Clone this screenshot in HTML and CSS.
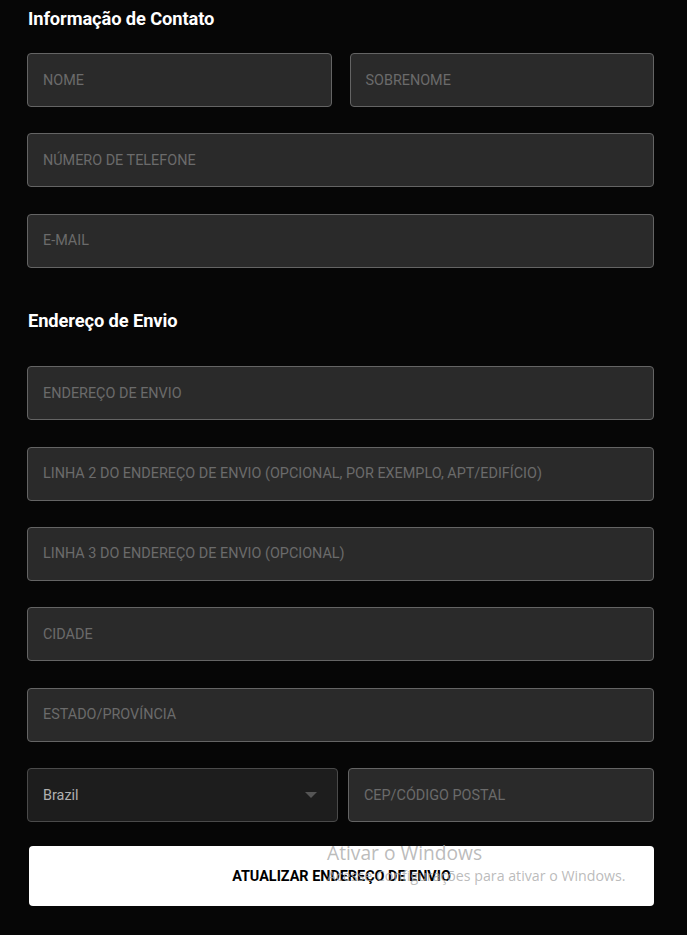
FILE: index.html
```html
<!DOCTYPE html>
<html lang="pt-BR">
<head>
<meta charset="utf-8">
<title>Endereço de Envio</title>
<link rel="stylesheet" href="styles.css">
</head>
<body>
<main class="page">
  <h2 class="section-title first">Informação de Contato</h2>
  <div class="row two">
    <div class="field"><span class="ph">NOME</span></div>
    <div class="field"><span class="ph">SOBRENOME</span></div>
  </div>
  <div class="field"><span class="ph">NÚMERO DE TELEFONE</span></div>
  <div class="field"><span class="ph">E-MAIL</span></div>

  <h2 class="section-title second">Endereço de Envio</h2>
  <div class="field"><span class="ph">ENDEREÇO DE ENVIO</span></div>
  <div class="field"><span class="ph">LINHA 2 DO ENDEREÇO DE ENVIO (OPCIONAL, POR EXEMPLO, APT/EDIFÍCIO)</span></div>
  <div class="field"><span class="ph">LINHA 3 DO ENDEREÇO DE ENVIO (OPCIONAL)</span></div>
  <div class="field"><span class="ph">CIDADE</span></div>
  <div class="field"><span class="ph">ESTADO/PROVÍNCIA</span></div>
  <div class="row split">
    <div class="field select"><span class="val">Brazil</span><span class="caret"></span></div>
    <div class="field"><span class="ph">CEP/CÓDIGO POSTAL</span></div>
  </div>
  <button class="submit">ATUALIZAR ENDEREÇO DE ENVIO</button>
</main>
<div class="watermark">
  <div class="wm-title">Ativar o Windows</div>
  <div class="wm-sub">Acesse Configurações para ativar o Windows.</div>
</div>
</body>
</html>
```
FILE: styles.css
```css
html, body {
  margin: 0;
  padding: 0;
  background: #060606;
}
body {
  font-family: Roboto, "Liberation Sans", sans-serif;
  width: 687px;
  height: 935px;
  overflow: hidden;
  position: relative;
}
.page {
  padding: 0 33px 0 27px;
  display: flex;
  flex-direction: column;
}
.section-title {
  margin: 0;
  color: #ffffff;
  font-family: Roboto, "Liberation Sans", sans-serif;
  font-weight: 700;
  font-size: 18.3px;
  line-height: 22px;
  letter-spacing: -0.1px;
  padding-left: 1px;
}
.section-title.first {
  margin-top: 8px;
  margin-bottom: 23px;
}
.section-title.second {
  margin-top: 16px;
  margin-bottom: 34px;
}
.row {
  display: flex;
}
.row.two { gap: 18px; }
.row.split { gap: 10px; }
.row > .field { flex: 1; }
.field {
  box-sizing: border-box;
  height: 54px;
  margin-bottom: 26.4px;
  background: #2a2a2a;
  border: 1px solid #646464;
  border-radius: 4px;
  display: flex;
  align-items: center;
  padding: 0 15px;
}
.ph {
  color: #6b6b6b;
  font-size: 14.4px;
  letter-spacing: 0;
}
.select {
  background: #1d1d1d;
  border-color: #4a4a4a;
  justify-content: space-between;
  padding-right: 20px;
}
.val {
  color: #b0b0b0;
  font-size: 14.4px;
}
.caret {
  width: 0;
  height: 0;
  border-left: 6px solid transparent;
  border-right: 6px solid transparent;
  border-top: 6px solid #555555;
}
.submit {
  margin: -2.5px 0 0 2px;
  height: 60px;
  background: #ffffff;
  border: none;
  border-radius: 4px;
  color: #000;
  font-family: Roboto, "Liberation Sans", sans-serif;
  font-weight: 700;
  font-size: 14.4px;
  padding: 0;
  display: flex;
  align-items: center;
  justify-content: center;
}
.watermark {
  position: absolute;
  left: 327px;
  top: 841px;
  font-family: "Open Sans", "DejaVu Sans", sans-serif;
  color: rgba(170, 170, 170, 0.8);
  pointer-events: none;
}
.wm-title {
  font-size: 19.2px;
  line-height: 24px;
}
.wm-sub {
  font-size: 14.2px;
  line-height: 20px;
  margin-top: 1px;
}
```
